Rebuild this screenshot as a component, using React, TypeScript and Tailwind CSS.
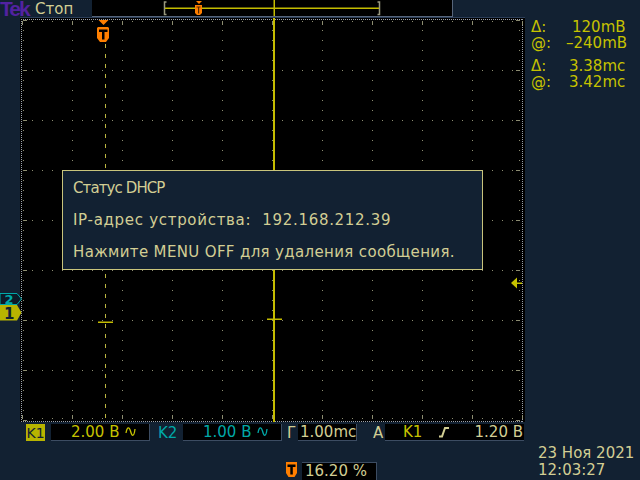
import React from "react";

const beige = "#d2ce94";
const yellow = "#c6c200";
const cyan = "#00a8a8";
const orange = "#ff7f00";

const GridDrawing = () => {
  const dots: React.ReactElement[] = [];
  // border dotted lines
  for (let x = 1; x <= 502; x += 2) {
    dots.push(<rect key={`t${x}`} x={x} y={1} width={1} height={1} fill="#9aa0aa" />);
    dots.push(<rect key={`b${x}`} x={x} y={403} width={1} height={1} fill="#9aa0aa" />);
  }
  for (let y = 1; y <= 403; y += 2) {
    dots.push(<rect key={`l${y}`} x={1} y={y} width={1} height={1} fill="#9aa0aa" />);
    dots.push(<rect key={`r${y}`} x={502} y={y} width={1} height={1} fill="#9aa0aa" />);
  }
  // border ticks
  for (let x = 2; x <= 502; x += 10) {
    const major = (x - 2) % 50 === 0;
    dots.push(<rect key={`tt${x}`} x={x} y={3} width={1} height={major ? 4 : 1} fill="#8c8c70" />);
    dots.push(<rect key={`bt${x}`} x={x} y={major ? 397 : 400} width={1} height={major ? 4 : 1} fill="#8c8c70" />);
  }
  for (let y = 2; y <= 402; y += 10) {
    const major = (y - 2) % 50 === 0;
    dots.push(<rect key={`lt${y}`} x={3} y={y} width={major ? 4 : 1} height={1} fill="#8c8c70" />);
    dots.push(<rect key={`rt${y}`} x={major ? 496 : 499} y={y} width={major ? 4 : 1} height={1} fill="#8c8c70" />);
  }
  // interior graticule
  for (let gx = 52; gx <= 452; gx += 50) {
    for (let y = 12; y <= 392; y += 10) {
      dots.push(<rect key={`v${gx}-${y}`} x={gx} y={y} width={1} height={1} fill="#8c8c70" />);
    }
  }
  for (let gy = 52; gy <= 352; gy += 50) {
    for (let x = 12; x <= 492; x += 10) {
      dots.push(<rect key={`h${gy}-${x}`} x={x} y={gy} width={1} height={1} fill="#8c8c70" />);
    }
  }

  return (
    <svg width="505" height="404" className="block">
      {dots}
      {/* trigger position dashed line */}
      <line x1={85.5} y1={26} x2={85.5} y2={403} stroke="#bcb640" strokeWidth={1} strokeDasharray="4 6" />
      {/* cursor */}
      <rect x={253} y={0} width={2} height={404} fill="#c4bc00" />
      <rect x={247} y={300.5} width={15} height={1.5} fill="#c4bc00" />
      <rect x={78} y={303.5} width={15} height={1.5} fill="#c4bc00" />
      {/* trigger level arrow */}
      <polygon points="491,265 497,259.5 497,270.5" fill={yellow} />
      <rect x={497} y={264.5} width={5} height={1.5} fill={yellow} />
      {/* trigger marker */}
      <g transform="translate(77,2)">
        <polygon points="1.5,0 11.5,0 6.5,5" fill={orange} />
        <polygon points="1,7 11,7 12,8 12,18 9,22 3,22 0,18 0,8" fill={orange} />
        <rect x={2} y={9.5} width={8.5} height={2.5} fill="#000" />
        <rect x={5} y={12} width={2.5} height={7.5} fill="#000" />
      </g>
    </svg>
  );
};

const SineIcon = ({ color }: { color: string }) => (
  <svg width="11" height="12" viewBox="0 0 11 12">
    <path d="M1 7 C2 1 4 0 5.5 5 C7 11 9 11 10 3" fill="none" stroke={color} strokeWidth={1.3} />
  </svg>
);

const EdgeIcon = () => (
  <svg width="13" height="12" viewBox="0 0 13 12">
    <path d="M1 10.5 H4 L7 2 H11" fill="none" stroke={beige} strokeWidth={2} />
  </svg>
);

const App = () => {
  return (
    <div className="w-[640px] h-[480px] bg-[#122132] flex flex-col overflow-hidden font-['DejaVu_Sans',sans-serif] text-[15px]">
      {/* header */}
      <div className="h-[17px] flex items-start shrink-0">
        <div className="w-[35px] h-[17px] text-[21px] leading-[17px] font-bold tracking-[-2px] text-[#5222a0] font-['Liberation_Sans',sans-serif] whitespace-nowrap">
          Tek
        </div>
        <div className="w-[57px] pt-[1px] leading-[16px] text-[#d2ce94]">Стоп</div>
        <div className="w-[361px] h-[17px] bg-black border-b border-r border-[#56657a]">
          <svg width="360" height="16" className="block">
            <path d="M74.5 2 H72.5 V14.5 H74.5" fill="none" stroke="#9a9a80" strokeWidth={1.5} />
            <path d="M285.5 2 H287.5 V14.5 H285.5" fill="none" stroke="#9a9a80" strokeWidth={1.5} />
            <rect x={73} y={7.5} width={214} height={1.5} fill="#c4bc00" />
            <rect x={181.5} y={0} width={1.5} height={16} fill="#c4bc00" />
            <g transform="translate(103,1)">
              <polygon points="1,0 7,0 4,3" fill={orange} />
              <polygon points="0,4 7,4 7,12 5,14 2,14 0,12" fill={orange} />
              <rect x={1.5} y={5.5} width={4} height={1} fill="#5a2a00" />
              <rect x={3} y={6} width={1.2} height={6.5} fill="#5a2a00" />
            </g>
          </svg>
        </div>
      </div>

      {/* screen row */}
      <div className="flex h-[405px] shrink-0">
        <div className="w-[20px] relative">
          <svg width="22" height="29" className="absolute left-0 top-[276px] z-10">
            <polygon points="0,0.5 17,0.5 21.5,6 17,11.5 0,11.5" fill="#0c1a28" stroke={cyan} strokeWidth={1} />
            <text x={4.5} y={11} fontSize={13} fontWeight="bold" fill={cyan} fontFamily="DejaVu Sans">2</text>
            <polygon points="0,12 17,12 21.5,19.5 17,27.5 0,27.5" fill="#b8b400" />
            <text x={4} y={26} fontSize={15} fontWeight="bold" fill="#122132" fontFamily="DejaVu Sans">1</text>
          </svg>
        </div>
        <div className="w-[505px] relative bg-black border-t border-[#2c3e58]">
          <GridDrawing />
          {/* DHCP message */}
          <div className="absolute left-[42px] top-[152px] w-[421px] h-[100px] bg-[#122132] border border-[#c8c47c] pl-[10px] pt-[9px] flex flex-col gap-[16px] leading-[16px] text-[#d2ce94] whitespace-nowrap">
            <div className="tracking-[-0.9px]">Статус DHCP</div>
            <div className="whitespace-pre tracking-[0.7px]">IP-адрес устройства:  192.168.212.39</div>
            <div className="tracking-[0.35px]">Нажмите MENU OFF для удаления сообщения.</div>
          </div>
        </div>
        <div className="flex-1 pl-[6px] pt-[2px] leading-[16px] text-[#c6c200] whitespace-nowrap">
          <div className="flex">
            <span className="w-[35px]">Δ:</span>
            <span className="pl-[6px]">120mB</span>
          </div>
          <div className="flex">
            <span className="w-[35px]">@:</span>
            <span>–240mB</span>
          </div>
          <div className="flex mt-[7px]">
            <span className="w-[35px]">Δ:</span>
            <span className="pl-[3px]">3.38mc</span>
          </div>
          <div className="flex">
            <span className="w-[35px]">@:</span>
            <span className="pl-[3px]">3.42mc</span>
          </div>
        </div>
      </div>

      {/* bottom bar */}
      <div className="flex mt-[2px] h-[17px] shrink-0 leading-[16px] whitespace-nowrap">
        <div className="ml-[26px] w-[19px] bg-[#b8b400] text-[#122132] text-[14px] flex items-center justify-center">K1</div>
        <div className="ml-[6px] w-[99px] bg-black border-b border-r border-[#3c4c62] flex items-center pl-[20px] gap-[6px] text-[#c6c200]">
          <span>2.00 B</span>
          <SineIcon color={yellow} />
        </div>
        <div className="ml-[8px] w-[25px] text-[#00a8a8] flex items-center">K2</div>
        <div className="w-[99px] bg-black border-b border-r border-[#3c4c62] flex items-center pl-[20px] gap-[6px] text-[#00a8a8]">
          <span>1.00 B</span>
          <SineIcon color={cyan} />
        </div>
        <div className="ml-[5px] w-[11px] text-[#d2ce94] flex items-center">Г</div>
        <div className="w-[59px] bg-black border-b border-r border-[#3c4c62] flex items-center pl-[2px] text-[#d2ce94]">1.00mc</div>
        <div className="ml-[16px] w-[12px] text-[#d2ce94] flex items-center">A</div>
        <div className="w-[139px] bg-black border-b border-[#3c4c62] flex items-center pl-[18px] text-[#d2ce94]">
          <span className="text-[#c6c200]">K1</span>
          <span className="ml-[16px]"><EdgeIcon /></span>
          <span className="flex-1 text-right pr-[1px]">1.20 B</span>
        </div>
      </div>

      <div className="flex flex-1 whitespace-nowrap">
        <div className="ml-[286px] self-end flex items-end">
          <svg width="11" height="15" className="mb-[3px] block">
            <polygon points="0,0 11,0 11,11 8.5,15 2.5,15 0,11" fill={orange} />
            <rect x={1.5} y={2.5} width={8} height={2.5} fill="#000" />
            <rect x={4.3} y={5} width={2.5} height={7.5} fill="#000" />
          </svg>
          <div className="ml-[5px] w-[75px] h-[18px] bg-black border-t border-r border-[#3c4c62] pl-[3px] leading-[17px] text-[#d2ce94]">
            16.20 %
          </div>
        </div>
        <div className="ml-[161px] pt-[4px] leading-[17px] text-[#d2ce94]">
          <div>23 Ноя 2021</div>
          <div>12:03:27</div>
        </div>
      </div>
    </div>
  );
};

export default App;
